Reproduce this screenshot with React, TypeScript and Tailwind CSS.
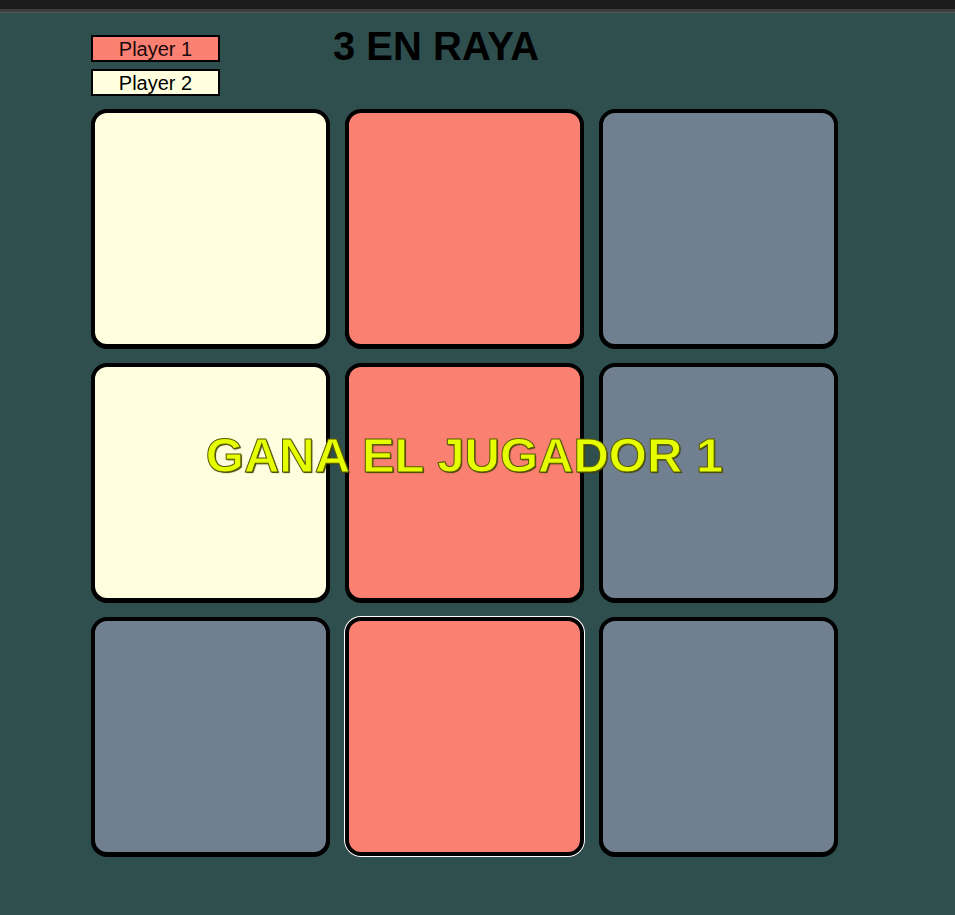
import React from "react";

type Cell = "p1" | "p2" | null;

const board: Cell[] = ["p2", "p1", null, "p2", "p1", null, null, "p1", null];

const cellColor = (c: Cell) =>
  c === "p1" ? "bg-[#fa8072]" : c === "p2" ? "bg-[#ffffe0]" : "bg-[#708090]";

export default function App() {
  return (
    <div
      className="min-h-[915px] w-full bg-[#2f4f4f]"
      style={{ fontFamily: '"Liberation Sans", Arial, sans-serif' }}
    >
      {/* window chrome strip */}
      <div className="h-[9px] bg-[#1b1b1b]" />
      <div className="h-[3px] bg-[#3d3d3d]" />
      <div className="h-px bg-[#4a5a5a]" />

      <div className="pl-[91px]">
        {/* Header */}
        <div className="flex items-start">
          <div className="flex flex-col gap-[7px] pt-[22px]">
            <div className="flex h-[27px] w-[129px] items-center justify-center border-2 border-black bg-[#fa8072] text-[20px] leading-none text-[#1a0a0a]">
              Player 1
            </div>
            <div className="flex h-[27px] w-[129px] items-center justify-center border-2 border-black bg-[#ffffe0] text-[20px] leading-none text-black">
              Player 2
            </div>
          </div>
          <h1 className="ml-[113px] pt-[10px] text-[40px] font-bold leading-[46px] text-black">
            3 EN RAYA
          </h1>
        </div>

        {/* Board */}
        <div className="relative mt-[13px] w-fit">
          <div className="grid grid-cols-[repeat(3,239px)] gap-[15px]">
            {board.map((c, i) => (
              <div
                key={i}
                className={`h-[239px] w-[239px] rounded-[16px] border-4 border-black shadow-[0_1px_0_#000] ${cellColor(
                  c
                )} ${i === 7 ? "ring-1 ring-white" : ""}`}
              />
            ))}
          </div>

          {/* Winner banner */}
          <div className="pointer-events-none absolute left-0 right-0 top-[322px] flex justify-center">
            <span className="text-[49px] font-bold leading-[49px] text-[#e6ff00] [-webkit-text-stroke:1px_#5a5a00] [text-shadow:1px_1px_1px_#3a3a00]">
              GANA EL JUGADOR 1
            </span>
          </div>
        </div>
      </div>
    </div>
  );
}
